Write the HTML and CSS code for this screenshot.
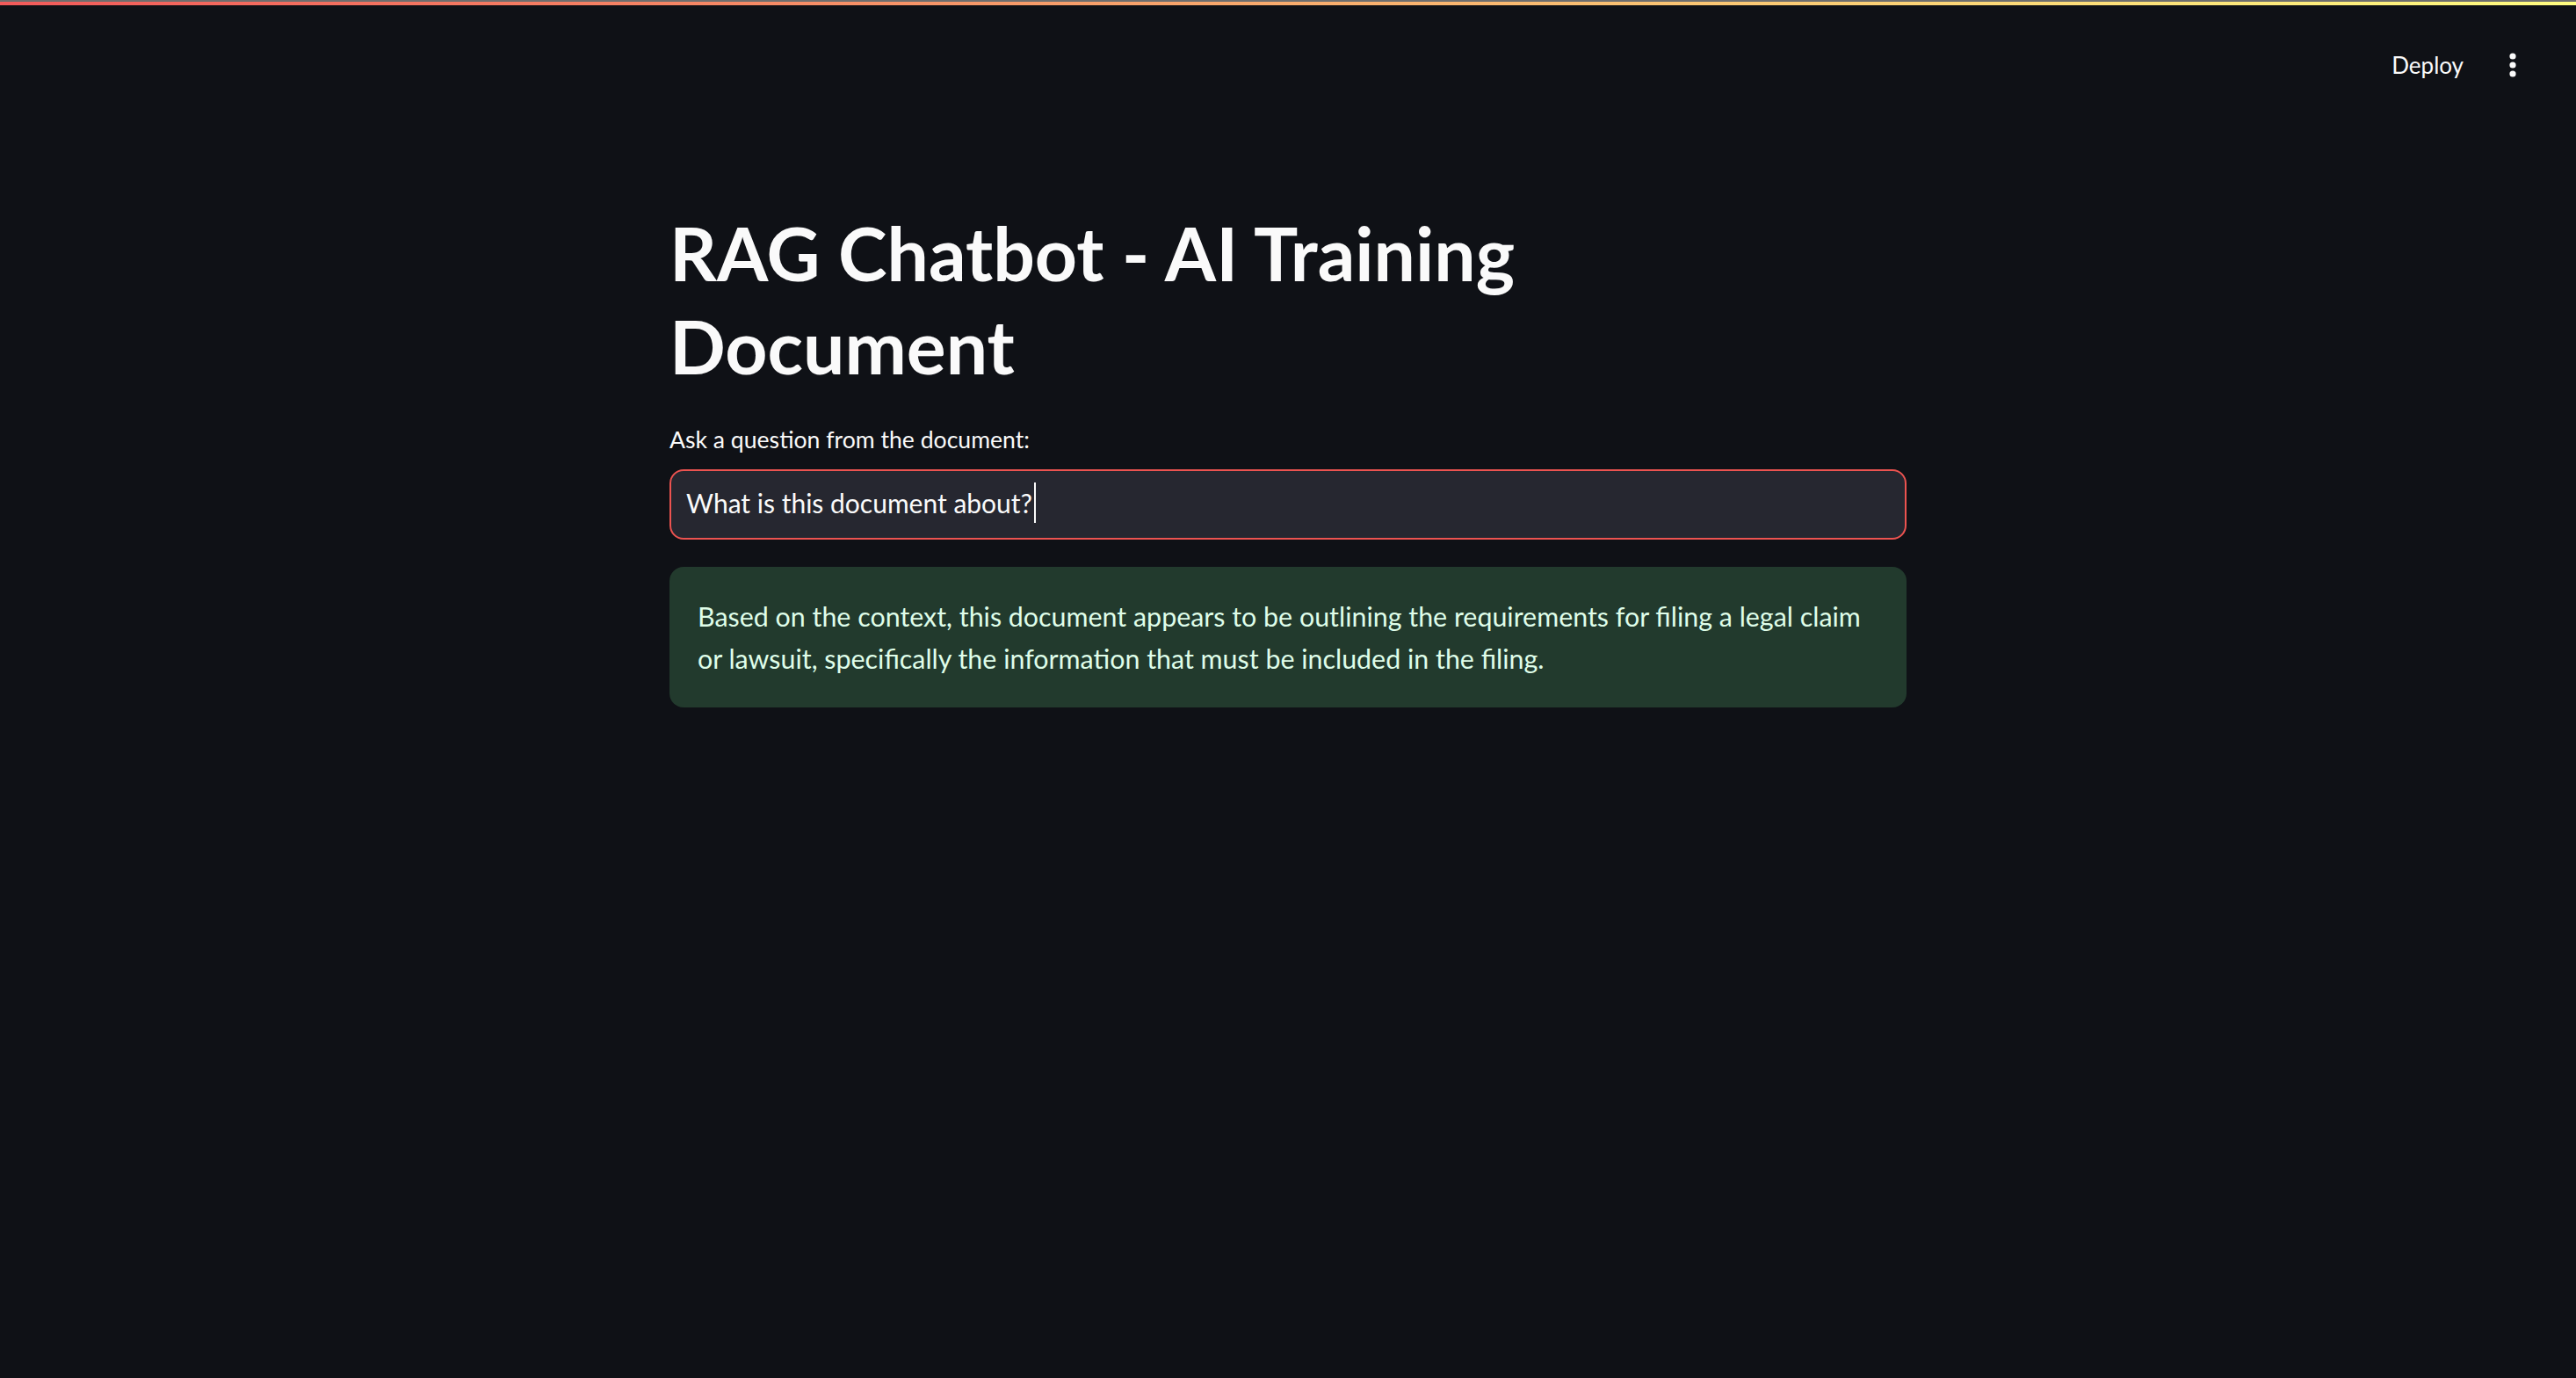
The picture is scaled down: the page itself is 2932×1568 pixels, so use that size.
FILE: index.html
```html
<!DOCTYPE html>
<html lang="en">
<head>
<meta charset="utf-8">
<title>RAG Chatbot - AI Training Document</title>
<link rel="stylesheet" href="styles.css">
</head>
<body>
<div class="decoration"></div>
<header class="header">
  <button class="deploy">Deploy</button>
  <button class="menu" aria-label="Main menu">
    <svg width="32" height="32" viewBox="0 0 32 32"><circle cx="16" cy="6" r="3.6" fill="#fafafa"/><circle cx="16" cy="16" r="3.6" fill="#fafafa"/><circle cx="16" cy="26" r="3.6" fill="#fafafa"/></svg>
  </button>
</header>
<main class="main">
  <h1 class="title">RAG Chatbot - AI Training Document</h1>
  <div class="field">
    <label class="label">Ask a question from the document:</label>
    <div class="input"><span class="input-text">What is this document about?</span><span class="caret"></span></div>
  </div>
  <div class="alert">
    <p>Based on the context, this document appears to be outlining the requirements for filing a legal claim or lawsuit, specifically the information that must be included in the filing.</p>
  </div>
</main>
</body>
</html>
```
FILE: styles.css
```css
html, body {
  margin: 0;
  padding: 0;
  background: #0f1116;
  color: #fafafa;
  font-family: "Lato", "Liberation Sans", sans-serif;
  min-height: 100%;
}
* { box-sizing: border-box; }

.decoration {
  height: 6px;
  border-top: 2px solid #6e6e6e;
  background: linear-gradient(90deg, #f25a5a, #fffd80);
}

.header {
  height: 114px;
  padding: 48px 56px 0 0;
  display: flex;
  justify-content: flex-end;
  align-items: flex-start;
  gap: 40px;
}
.deploy {
  background: none;
  border: none;
  color: #fafafa;
  font-family: "Lato", sans-serif;
  font-size: 26px;
  line-height: 40px;
  height: 40px;
  padding: 0;
  margin: 0;
}
.menu {
  background: none;
  border: none;
  padding: 0;
  margin: 4px 0 0 0;
  width: 32px;
  height: 32px;
  display: flex;
}

.main {
  width: 1408px;
  margin: 0 auto;
  padding: 72px 0 320px;
  display: flex;
  flex-direction: column;
}

.title {
  margin: 0;
  padding: 43px 0 29px;
  max-width: 1200px;
  font-size: 84px;
  font-weight: 700;
  line-height: 105.6px;
  letter-spacing: 0;
  color: #fafafa;
}

.field {
  display: flex;
  flex-direction: column;
}
.label {
  font-size: 26.6px;
  line-height: 44.8px;
  height: 44.8px;
  margin: 3px 0 11px;
  color: #fafafa;
}
.input {
  height: 80px;
  border: 2px solid #ec5350;
  border-radius: 16px;
  background: #262730;
  padding: 0 17px 3px;
  display: flex;
  align-items: center;
  font-size: 30px;
  color: #fafafa;
}
.input-text { line-height: 36px; }
.caret {
  width: 2px;
  height: 46px;
  background: #fafafa;
  margin-left: 2px;
}

.alert {
  margin-top: 31px;
  background: #223a2d;
  border-radius: 16px;
  padding: 32px;
  color: #dffde9;
}
.alert p {
  margin: 0;
  font-size: 30.4px;
  line-height: 48px;
}
```
